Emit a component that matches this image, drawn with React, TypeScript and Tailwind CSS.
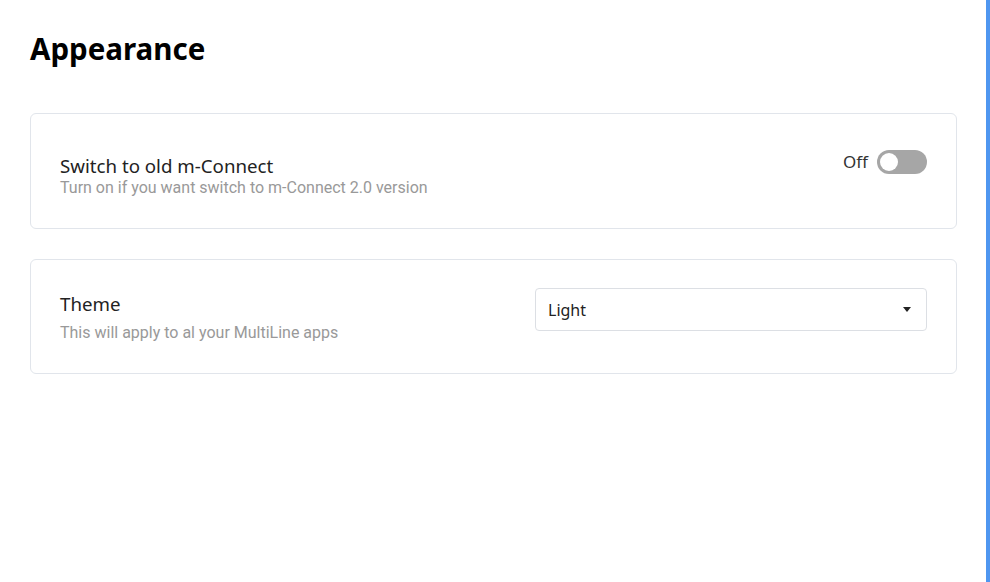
import { useState } from 'react';

const sans = { fontFamily: '"Noto Sans", "Open Sans", sans-serif' };
const roboto = { fontFamily: 'Roboto, sans-serif' };

function Toggle({ on, onChange }: { on: boolean; onChange: () => void }) {
  return (
    <button
      onClick={onChange}
      className={`relative w-[50px] h-[24px] rounded-full transition-colors ${
        on ? 'bg-[#4f96f0]' : 'bg-[#a6a6a6]'
      }`}>
      <span
        className={`absolute top-[3px] w-[18px] h-[18px] rounded-full bg-white transition-all ${
          on ? 'left-[29px]' : 'left-[3px]'
        }`}
      />
    </button>
  );
}

export default function App() {
  const [oldConnect, setOldConnect] = useState(false);

  return (
    <div className="flex w-[990px] h-[582px] bg-white overflow-hidden">
      <main className="flex-1 pl-[30px] pr-[29px] pt-[31px]" style={sans}>
        <h1 className="text-[29.5px] leading-[36px] font-bold text-black">
          Appearance
        </h1>

        <div className="mt-[46px] flex flex-col gap-[30px]">
          <section className="flex justify-between items-start h-[116px] border border-[#e1e5eb] rounded-[6px] px-[29px] pt-[40px]">
            <div>
              <div className="text-[18.7px] leading-[24px] text-[#222]">
                Switch to old m-Connect
              </div>
              <div className="text-[16px] leading-[20px] text-[#999]" style={roboto}>
                Turn on if you want switch to m-Connect 2.0 version
              </div>
            </div>
            <div className="flex items-center gap-[9px] -mt-[4px]">
              <span className="text-[17px] leading-[24px] text-[#333]">
                {oldConnect ? 'On' : 'Off'}
              </span>
              <Toggle on={oldConnect} onChange={() => setOldConnect(v => !v)} />
            </div>
          </section>

          <section className="flex justify-between items-start h-[115px] border border-[#e1e5eb] rounded-[6px] px-[29px] pt-[28px]">
            <div className="flex flex-col gap-[7px] mt-[4px]">
              <div className="text-[18.7px] leading-[24px] text-[#222]">Theme</div>
              <div className="text-[16px] leading-[20px] text-[#999]" style={roboto}>
                This will apply to al your MultiLine apps
              </div>
            </div>
            <div className="flex items-center justify-between w-[392px] h-[43px] border border-[#dcdfe4] rounded-[4px] pl-[12px] pr-[15px]">
              <span className="text-[16px] text-[#222]">Light</span>
              <svg width="8" height="5" viewBox="0 0 8 5">
                <path d="M0 0h8L4 5z" fill="#222" />
              </svg>
            </div>
          </section>
        </div>
      </main>
      <div className="w-[4px] h-full bg-[#4f96f0]" />
    </div>
  );
}
